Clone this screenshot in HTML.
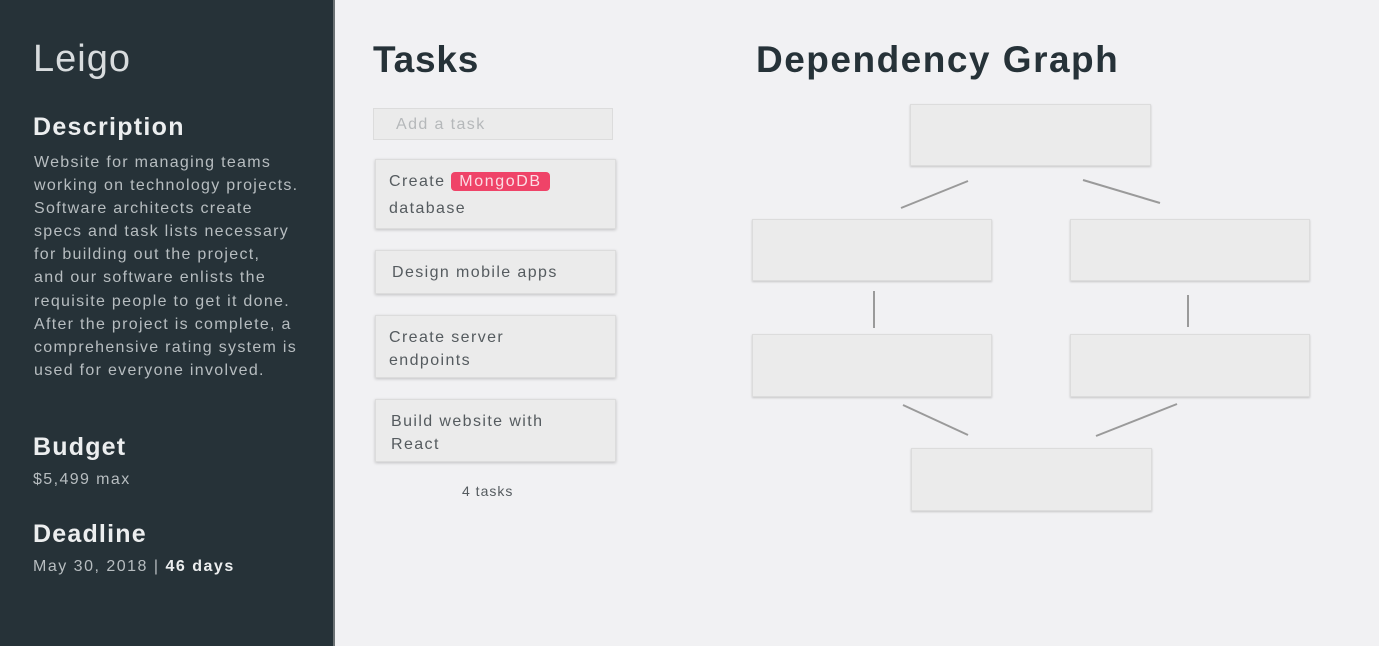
<!DOCTYPE html>
<html><head><style>
*{margin:0;padding:0;box-sizing:border-box}
body{width:1379px;height:646px;background:#f1f1f3;font-family:"Liberation Sans",sans-serif;position:relative;overflow:hidden}
.side{position:absolute;left:0;top:0;width:335px;height:646px;background:#263238;border-right:2px solid #6b7174;color:#fff}
.a{position:absolute;white-space:nowrap}
.box{position:absolute;background:#ebebeb;border:1px solid #dcdcdc;box-shadow:0 1px 2px rgba(0,0,0,.18)}
.card{position:absolute;left:375px;width:241px;background:#ebebeb;border:1px solid #dcdcdc;box-shadow:0 1px 3px rgba(0,0,0,.2);color:#555b5f;font-size:16px;letter-spacing:1.4px;line-height:23px;padding:10px 13px}
</style></head><body>
<div class="side">
<div class="a" style="left:33px;top:38px;font-size:38px;color:#d8dcde;letter-spacing:1px">Leigo</div>
<div class="a" style="left:33px;top:113px;font-size:25px;font-weight:bold;letter-spacing:1.3px;color:#eceeef">Description</div>
<div class="a" style="left:34px;top:151px;font-size:16px;line-height:23.1px;color:#b7bdc0;letter-spacing:1.3px">Website for managing teams<br>working on technology projects.<br>Software architects create<br>specs and task lists necessary<br>for building out the project,<br>and our software enlists the<br>requisite people to get it done.<br>After the project is complete, a<br>comprehensive rating system is<br>used for everyone involved.</div>
<div class="a" style="left:33px;top:433px;font-size:25px;font-weight:bold;letter-spacing:1.2px;color:#eceeef">Budget</div>
<div class="a" style="left:33px;top:471px;font-size:16px;color:#b7bdc0;letter-spacing:1.4px">$5,499 max</div>
<div class="a" style="left:33px;top:520px;font-size:25px;font-weight:bold;letter-spacing:1.2px;color:#eceeef">Deadline</div>
<div class="a" style="left:33px;top:558px;font-size:16px;color:#b7bdc0;letter-spacing:1.5px">May 30, 2018 | <b style="color:#eceeef">46 days</b></div>
</div>
<div class="a" style="left:373px;top:39px;font-size:37px;font-weight:bold;color:#263238;letter-spacing:0.8px">Tasks</div>
<div class="a" style="left:756px;top:39px;font-size:37px;font-weight:bold;color:#263238;letter-spacing:1.5px">Dependency Graph</div>
<div class="box" style="left:373px;top:108px;width:240px;height:32px;box-shadow:none;color:#b5b8ba;font-size:16px;letter-spacing:1.4px;padding:7px 22px">Add a task</div>
<div class="card" style="top:159px;height:70px;padding-left:13px">Create <span style="background:#ef4368;color:#fbdde4;border-radius:4px;padding:1px 8px;letter-spacing:1.6px">MongoDB</span><br><span style="line-height:31px">database</span></div>
<div class="card" style="top:250px;height:44px;padding-left:16px">Design mobile apps</div>
<div class="card" style="top:315px;height:63px">Create server<br>endpoints</div>
<div class="card" style="top:399px;height:63px;padding-left:15px">Build website with<br>React</div>
<div class="a" style="left:462px;top:483px;font-size:14px;color:#555b5f;letter-spacing:1px">4 tasks</div>
<div class="box" style="left:910px;top:104px;width:241px;height:62px"></div>
<div class="box" style="left:752px;top:219px;width:240px;height:62px"></div>
<div class="box" style="left:1070px;top:219px;width:240px;height:62px"></div>
<div class="box" style="left:752px;top:334px;width:240px;height:63px"></div>
<div class="box" style="left:1070px;top:334px;width:240px;height:63px"></div>
<div class="box" style="left:911px;top:448px;width:241px;height:63px"></div>
<svg class="a" style="left:0;top:0" width="1379" height="646"><g stroke="#9a9a9a" stroke-width="2">
<line x1="901" y1="208" x2="968" y2="181"/><line x1="1083" y1="180" x2="1160" y2="203"/>
<line x1="874" y1="291" x2="874" y2="328"/><line x1="1188" y1="295" x2="1188" y2="327"/>
<line x1="903" y1="405" x2="968" y2="435"/><line x1="1177" y1="404" x2="1096" y2="436"/></g></svg>
</body></html>
